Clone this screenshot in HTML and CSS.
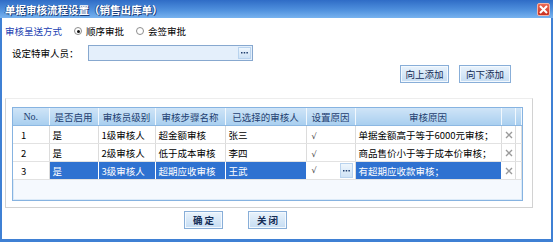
FILE: index.html
```html
<!DOCTYPE html>
<html lang="zh-CN">
<head>
    <meta charset="UTF-8">
    <title>单据审核流程设置</title>
    <link rel="stylesheet" href="styles.css">
</head>
<body>
    <div class="window">
        <div class="titlebar">
            <span class="title">单据审核流程设置（销售出库单）</span>
            <span class="close">
                <svg width="9" height="9" viewBox="0 0 9 9"><path d="M1 1L8 8M8 1L1 8" stroke="#fff" stroke-width="2"/></svg>
            </span>
        </div>
        <div class="content">
            <div class="mode-row">
                <span class="mode-label">审核呈送方式</span>
                <span class="radio checked"></span><span class="radio-text">顺序审批</span>
                <span class="radio"></span><span class="radio-text">会签审批</span>
            </div>
            <div class="person-row">
                <span class="person-label">设定特审人员：</span>
                <div class="picker">
                    <span class="dots-btn">
                        <svg width="7" height="2" viewBox="0 0 7 2"><path d="M0 0h1.5v1.5H0zM2.7 0h1.5v1.5H2.7zM5.4 0h1.5v1.5H5.4z" fill="#22406f"/></svg>
                    </span>
                </div>
            </div>
            <div class="add-row">
                <button class="btn btn-up">向上添加</button>
                <button class="btn btn-down">向下添加</button>
            </div>
            <div class="group">
                <div class="grid">
                    <table>
                        <colgroup>
                            <col style="width:36px"><col style="width:49px"><col style="width:57px">
                            <col style="width:70px"><col style="width:81px"><col style="width:49px">
                            <col style="width:146px"><col style="width:14px"><col style="width:6px">
                        </colgroup>
                        <thead>
                            <tr>
                                <th>No.</th><th>是否启用</th><th>审核员级别</th><th>审核步骤名称</th>
                                <th>已选择的审核人</th><th>设置原因</th><th>审核原因</th><th></th><th></th>
                            </tr>
                        </thead>
                        <tbody>
                            <tr>
                                <td class="num">1</td><td>是</td><td>1级审核人</td><td>超金额审核</td><td>张三</td>
                                <td class="chk"><span class="mark">√</span></td><td>单据金额高于等于6000元审核；</td>
                                <td class="del"><svg width="8" height="8" viewBox="0 0 8 8"><path d="M1 1L7 7M7 1L1 7" stroke="#9a9a9a" stroke-width="1.4"/></svg></td><td></td>
                            </tr>
                            <tr>
                                <td class="num">2</td><td>是</td><td>2级审核人</td><td>低于成本审核</td><td>李四</td>
                                <td class="chk"><span class="mark">√</span></td><td>商品售价小于等于成本价审核；</td>
                                <td class="del"><svg width="8" height="8" viewBox="0 0 8 8"><path d="M1 1L7 7M7 1L1 7" stroke="#9a9a9a" stroke-width="1.4"/></svg></td><td></td>
                            </tr>
                            <tr>
                                <td class="num">3</td><td class="sel">是</td><td class="sel">3级审核人</td><td class="sel">超期应收审核</td><td class="sel">王武</td>
                                <td class="chk">
                                    <div class="chk-edit">
                                        <span class="mark">√</span>
                                        <span class="dots-btn cell">
                                            <svg width="7" height="2" viewBox="0 0 7 2"><path d="M0 0h1.5v1.5H0zM2.7 0h1.5v1.5H2.7zM5.4 0h1.5v1.5H5.4z" fill="#22406f"/></svg>
                                        </span>
                                    </div>
                                </td>
                                <td class="sel">有超期应收款审核；</td>
                                <td class="del"><svg width="8" height="8" viewBox="0 0 8 8"><path d="M1 1L7 7M7 1L1 7" stroke="#9a9a9a" stroke-width="1.4"/></svg></td><td></td>
                            </tr>
                        </tbody>
                    </table>
                </div>
            </div>
            <div class="footer">
                <button class="btn btn-foot">确 定</button>
                <button class="btn btn-foot">关 闭</button>
            </div>
        </div>
    </div>
</body>
</html>
```
FILE: styles.css
```css
body {
    margin: 0;
    font-family: "Noto Sans CJK SC", "DejaVu Sans", sans-serif;
    font-size: 9.5px;
    color: #000;
    background-color: #fff;
}
.window {
    width: 553px;
    height: 242px;
    display: flex;
    flex-direction: column;
}
.titlebar {
    height: 18px;
    display: flex;
    align-items: center;
    justify-content: space-between;
    padding: 0 3px 0 5px;
    background: linear-gradient(to bottom, #2f6cc6 0%, #4f90dd 55%, #78b3ef 100%);
}
.title {
    color: #fff;
    font-weight: bold;
    font-size: 10.5px;
    text-shadow: 1px 1px 0 #1a3f7c, -1px 0 0 #2a5aa8;
}
.close {
    width: 13px;
    height: 13px;
    box-sizing: border-box;
    display: flex;
    align-items: center;
    justify-content: center;
    background: linear-gradient(to bottom, #ec6a55, #c92f1f);
    border: 1px solid #f3b3a6;
    border-radius: 2px;
}
.content {
    flex: 1;
    border-left: 2px solid #3f80d4;
    border-right: 2px solid #3f80d4;
    border-bottom: 3px solid #3f80d4;
    padding-left: 3px;
}
.mode-row {
    margin-top: 6px;
    height: 14px;
    display: flex;
    align-items: center;
}
.mode-label {
    color: #1c3fb2;
    margin-right: 12px;
}
.radio {
    width: 8px;
    height: 8px;
    border: 1px solid #8d8d8d;
    border-radius: 50%;
    box-sizing: border-box;
    display: flex;
    align-items: center;
    justify-content: center;
    margin-right: 4px;
}
.radio.checked::after {
    content: "";
    width: 3px;
    height: 3px;
    border-radius: 50%;
    background-color: #111;
}
.radio-text {
    margin-right: 12px;
}
.person-row {
    margin-top: 7px;
    height: 16px;
    display: flex;
    align-items: center;
    padding-left: 7px;
}
.person-label {
    width: 76px;
}
.picker {
    width: 165px;
    height: 16px;
    box-sizing: border-box;
    border: 1px solid #87a8cf;
    background-color: #e4effb;
    display: flex;
    justify-content: flex-end;
    align-items: center;
    padding-right: 1px;
}
.dots-btn {
    width: 13px;
    height: 12px;
    box-sizing: border-box;
    display: flex;
    align-items: center;
    justify-content: center;
    background: linear-gradient(to bottom, #eef6fd, #cfe3f6);
    border: 1px solid #b9d3ee;
}
.dots-btn.cell {
    height: 15px;
}
.add-row {
    margin-top: 4px;
    height: 18px;
    display: flex;
    justify-content: flex-end;
    gap: 10px;
    padding-right: 40px;
}
.btn {
    height: 18px;
    padding: 0;
    font-family: inherit;
    font-size: 9.5px;
    color: #142c55;
    background: linear-gradient(to bottom, #e9f3fc, #c6ddf3);
    border: 1px solid #88aed8;
    box-shadow: inset 0 0 0 1px #f4f9fe;
}
.btn-up {
    width: 49px;
}
.btn-down {
    width: 52px;
}
.group {
    margin-top: 15px;
    width: 528px;
    height: 110px;
    box-sizing: border-box;
    border: 1px solid #d2d2d2;
    border-top-color: #ededed;
    padding: 8px 9px 6px 6px;
}
.grid {
    height: 94px;
    box-sizing: border-box;
    border: 1px solid #86b3e1;
    background-color: #f5f9fe;
    box-shadow: inset 0 0 0 1px #dbeaf8;
}
table {
    width: 508px;
    table-layout: fixed;
    border-collapse: collapse;
}
th {
    height: 17px;
    padding: 0;
    font-weight: normal;
    color: #1e3e70;
    background: linear-gradient(to bottom, #cfe4f7, #a9cfef);
    border-right: 1px solid #f2f8fd;
    border-bottom: 1px solid #8db8e2;
    white-space: nowrap;
    overflow: hidden;
}
th:first-child {
    font-family: "Liberation Serif", serif;
    font-size: 10px;
}
td {
    height: 17px;
    padding: 0 0 0 3px;
    background-color: #fff;
    border-right: 1px solid #dcdcdc;
    border-bottom: 1px solid #e2e2e2;
    white-space: nowrap;
    overflow: hidden;
}
td.num {
    padding-left: 8px;
}
td.chk {
    padding: 0 2px 0 5px;
}
.mark {
    font-family: "DejaVu Sans", sans-serif;
    font-size: 8px;
    color: #333;
}
.chk-edit {
    display: flex;
    justify-content: space-between;
    align-items: center;
}
td.del {
    padding: 0 0 0 3px;
}
td.del svg {
    display: block;
}
td.sel {
    background-color: #2f72d1;
    color: #fff;
    border-right-color: #fff;
}
.footer {
    margin-top: 3px;
    display: flex;
    gap: 25px;
    padding-left: 179px;
}
.btn-foot {
    width: 39px;
    font-weight: bold;
}
```
